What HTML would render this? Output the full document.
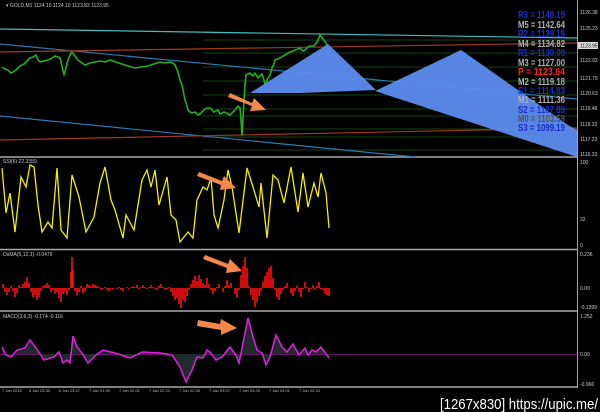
<!DOCTYPE html>
<html><head><meta charset="utf-8"><style>
html,body{margin:0;padding:0;background:#000;width:600px;height:412px;overflow:hidden}
svg{display:block}
text{font-family:"Liberation Sans",sans-serif}
</style></head><body>
<svg width="600" height="412" viewBox="0 0 600 412" xmlns="http://www.w3.org/2000/svg">
<rect width="600" height="412" fill="#000"/>
<g stroke="#a8a8a8" stroke-width="1.5">
<line x1="0" y1="157" x2="578" y2="157"/>
<line x1="0" y1="249.5" x2="578" y2="249.5"/>
<line x1="0" y1="311" x2="578" y2="311"/>
<line x1="0" y1="387" x2="578" y2="387"/>
</g>
<line x1="577.5" y1="0" x2="577.5" y2="388" stroke="#a8a8a8" stroke-width="1"/>

<text x="6" y="7" font-size="5" fill="#ccc">▾ GOLD,M1  1124.10 1124.10 1123.83 1123.95</text>
<g stroke="#1d5a1d" stroke-width="0.8">
<line x1="203" y1="40" x2="577" y2="40"/><line x1="203" y1="53" x2="577" y2="53"/>
<line x1="203" y1="67" x2="577" y2="67"/><line x1="203" y1="81" x2="577" y2="81"/>
<line x1="203" y1="95" x2="577" y2="95"/><line x1="203" y1="109" x2="577" y2="109"/>
<line x1="203" y1="116" x2="577" y2="116"/><line x1="203" y1="129" x2="577" y2="129"/>
<line x1="203" y1="137" x2="577" y2="137"/><line x1="203" y1="150" x2="577" y2="150"/>
</g>
<line x1="0" y1="29" x2="577" y2="38" stroke="#3fbfbf" stroke-width="1.2"/>
<line x1="0" y1="44" x2="577" y2="99" stroke="#2a7ab0" stroke-width="1.2"/>
<line x1="0" y1="52" x2="577" y2="43" stroke="#a03a20" stroke-width="1.2"/>
<line x1="0" y1="116" x2="415" y2="157" stroke="#2a7ab0" stroke-width="1.2"/>
<line x1="0" y1="140" x2="577" y2="128" stroke="#a03a20" stroke-width="1.2"/>
<polyline fill="none" stroke="#22b022" stroke-width="1.6" stroke-linejoin="round" points="2,67 5,69 8,70 11,73 13,72 16,70 20,66 24,64 27,61 30,58 33,57 36,55 38,60 40,62 44,61 48,60 52,58 55,56 58,57 60,58 62,66 64,75 66,68 68,60 70,55 72,52 75,56 78,60 82,63 85,65 90,63 95,62 100,61 105,62 110,60 116,62 122,64 128,66 135,68 141,67 148,66 154,64 160,62 165,63 170,62 173,63 175,65 178,72 180,80 182,85 184,95 185,100 187,106 188,110 190,112 192,113 195,112 198,115 200,114 204,110 207,108 210,108 214,112 218,110 220,114 224,112 228,114 230,115 233,112 235,110 238,106 240,108 241,120 242,135 243,118 244,100 245,85 246,75 248,74 250,73 253,76 255,73 258,78 260,76 262,74 264,80 265,85 267,80 268,78 270,75 272,68 274,64 275,60 278,59 280,58 283,56 285,55 288,53 290,52 293,51 295,50 298,49 300,48 303,51 305,50 308,47 310,46 313,46 315,45 317,42 318,40 320,35 322,38 324,40 326,43 327,45"/>
<polygon fill="#5b8cf0" opacity="0.95" points="250,93 328,44 376,90 300,93"/>
<polygon fill="#5b8cf0" opacity="0.95" points="375,91 461,50 568,125 577,130 577,157"/>
<g font-size="10" font-weight="bold">
<text x="518" y="18" fill="#1e2ec8" textLength="47" lengthAdjust="spacingAndGlyphs">R3 = 1148.19</text>
<text x="518" y="28" fill="#b0b0b0" textLength="47" lengthAdjust="spacingAndGlyphs">M5 = 1142.64</text>
<text x="518" y="37" fill="#1e2ec8" textLength="47" lengthAdjust="spacingAndGlyphs">R2 = 1139.19</text>
<text x="518" y="47" fill="#b0b0b0" textLength="47" lengthAdjust="spacingAndGlyphs">M4 = 1134.82</text>
<text x="518" y="56" fill="#1e2ec8" textLength="47" lengthAdjust="spacingAndGlyphs">R1 = 1130.09</text>
<text x="518" y="66" fill="#b0b0b0" textLength="47" lengthAdjust="spacingAndGlyphs">M3 = 1127.00</text>
<text x="518" y="75" fill="#ff2020" textLength="47" lengthAdjust="spacingAndGlyphs">P  = 1123.64</text>
<text x="518" y="85" fill="#b0b0b0" textLength="47" lengthAdjust="spacingAndGlyphs">M2 = 1119.18</text>
<text x="518" y="94" fill="#1e2ec8" textLength="47" lengthAdjust="spacingAndGlyphs">S1 = 1114.83</text>
<text x="518" y="103" fill="#b0b0b0" textLength="47" lengthAdjust="spacingAndGlyphs">M1 = 1111.36</text>
<text x="518" y="113" fill="#1e2ec8" textLength="47" lengthAdjust="spacingAndGlyphs">S2 = 1107.89</text>
<text x="518" y="122" fill="#555" textLength="47" lengthAdjust="spacingAndGlyphs">M0 = 1103.59</text>
<text x="518" y="131" fill="#1e2ec8" textLength="47" lengthAdjust="spacingAndGlyphs">S3 = 1099.19</text>
</g>
<g font-size="5" fill="#ccc">
<text x="580" y="14">1126.38</text><text x="580" y="30">1125.23</text>
<rect x="578" y="42" width="20" height="7" fill="#ddd"/><text x="580" y="47.5" fill="#000">1123.95</text>
<text x="580" y="62">1122.93</text><text x="580" y="80">1121.79</text>
<text x="580" y="95">1120.63</text><text x="580" y="110">1119.48</text>
<text x="580" y="126">1118.33</text><text x="580" y="141">1117.23</text>
<text x="580" y="156">1116.33</text>
<text x="580" y="164">100</text><text x="580" y="221">32</text><text x="580" y="247">0</text>
<text x="580" y="256">0.236</text><text x="580" y="290">0.00</text><text x="580" y="309">-0.1399</text>
<text x="580" y="318">1.252</text><text x="580" y="356">0.00</text><text x="580" y="386">-0.966</text>
</g>
<path d="M230 93 L252 103 L254 98 L266 110 L250 111 L252 106 L228 97Z" fill="#f4874a"/>

<text x="3" y="163" font-size="5" fill="#ccc">SSI(6) 22.3359</text>
<polyline fill="none" stroke="#f0f000" stroke-width="1.3" points="2,168 6,213 10,193 15,232 21,177 26,187 30,165 34,167 38,205 42,232 48,222 52,228 57,168 61,230 67,238 72,175 79,197 86,232 94,217 100,183 105,167 111,200 115,210 123,238 126,215 134,230 142,180 147,170 151,187 155,170 159,205 167,177 171,215 176,220 180,242 188,232 193,238 197,200 203,187 207,190 211,178 214,215 218,228 224,200 228,170 232,187 239,233 247,168 253,187 259,207 261,183 267,238 273,175 278,180 284,203 291,167 298,212 303,173 308,207 314,183 318,197 321,173 326,193 329,228"/>
<path d="M199 172 L222 181 L224 176 L236 188 L220 190 L221 185 L197 176Z" fill="#f4874a"/>

<text x="3" y="256" font-size="5" fill="#ccc">OsMA(5,12,3) -0.0479</text>
<path stroke="#ff1010" stroke-width="1.6" fill="none" d="M3 288V284M5 288V292M7 288V295M9 288V292M11 288V286M13 288V291M15 288V297M17 288V293M19 288V285M21 288V287M23 288V284M25 288V282M27 288V277M29 288V283M31 288V292M33 288V297M35 288V295M37 288V300M39 288V297M41 288V291M43 288V286M45 288V285M47 288V283M49 288V285M51 288V292M53 288V290M55 288V294M57 288V292M59 288V298M61 288V302M63 288V294M65 288V292M67 288V295M69 288V290M71 288V272M72 288V257M73 288V270M75 288V291M77 288V295M79 288V292M81 288V286M83 288V293M85 288V291M87 288V284M89 288V285M91 288V286M93 288V284M95 288V285M97 288V286M99 288V287M101 288V290M103 288V289M105 288V287M107 288V290M109 288V291M111 288V289M113 288V290M115 288V288M117 288V289M119 288V287M121 288V290M123 288V291M125 288V288M127 288V287M129 288V289M131 288V287M133 288V286M135 288V287M137 288V285M139 288V289M141 288V287M143 288V285M145 288V287M147 288V289M149 288V287M151 288V285M153 288V287M155 288V289M157 288V290M159 288V286M161 288V284M163 288V287M165 288V290M167 288V289M169 288V287M171 288V292M173 288V296M175 288V300M177 288V298M179 288V304M181 288V308M183 288V300M185 288V302M187 288V296M189 288V290M191 288V284M193 288V280M195 288V276M197 288V281M199 288V275M201 288V279M203 288V283M205 288V285M207 288V278M209 288V284M211 288V290M213 288V294M215 288V291M217 288V287M219 288V284M221 288V288M223 288V292M225 288V286M227 288V280M229 288V285M231 288V283M233 288V288M235 288V294M237 288V298M239 288V290M241 288V275M243 288V266M245 288V257M247 288V268M249 288V286M251 288V295M253 288V300M255 288V307M257 288V302M259 288V296M261 288V291M263 288V282M265 288V276M267 288V272M269 288V268M271 288V266M273 288V278M275 288V290M277 288V297M279 288V300M281 288V294M283 288V290M285 288V286M287 288V283M289 288V288M291 288V293M293 288V296M295 288V291M297 288V286M299 288V292M301 288V297M303 288V289M305 288V282M307 288V287M309 288V292M311 288V289M313 288V285M315 288V290M317 288V286M319 288V282M321 288V289M323 288V290M325 288V293M327 288V295M329 288V296"/>
<path d="M205 255 L228 264 L230 259 L242 271 L226 273 L227 268 L203 259Z" fill="#f4874a"/>

<text x="3" y="318" font-size="5" fill="#ccc">MACD(3,6,3) -0.174 -0.116</text>
<line x1="0" y1="354.5" x2="577" y2="354.5" stroke="#8a1a8a" stroke-width="0.8"/>
<polygon fill="#1f2b2b" points="2,354 2,347 6,355 11,357 17,350 25,348 30,340 36,348 44,360 54,357 59,352 63,363 67,360 70,363 73,336 77,347 82,353 88,363 96,355 103,350 115,353 130,358 142,352 161,353 172,355 180,367 186,382 192,370 197,357 203,358 207,350 211,353 216,360 222,357 230,347 236,355 239,363 248,318 253,337 257,350 262,353 266,365 270,357 276,335 282,347 287,352 293,344 299,355 305,348 308,355 312,350 316,352 321,347 329,358 329,354"/>
<polyline fill="none" stroke="#e020e0" stroke-width="1.5" points="2,347 6,355 11,357 17,350 25,348 30,340 36,348 44,360 54,357 59,352 63,363 67,360 70,363 73,336 77,347 82,353 88,363 96,355 103,350 115,353 130,358 142,352 161,353 172,355 180,367 186,382 192,370 197,357 203,358 207,350 211,353 216,360 222,357 230,347 236,355 239,363 248,318 253,337 257,350 262,353 266,365 270,357 276,335 282,347 287,352 293,344 299,355 305,348 308,355 312,350 316,352 321,347 329,358"/>
<path d="M198 320 L220 324 L221 319 L237 328 L221 335 L221 330 L197 326Z" fill="#f4874a"/>

<g font-size="4" fill="#bbb">
<text x="2" y="392">7 Jan 2015</text><text x="29" y="392">6 Jan 23:35</text><text x="59" y="392">6 Jan 23:47</text>
<text x="89" y="392">7 Jan 01:39</text><text x="119" y="392">7 Jan 02:01</text><text x="149" y="392">7 Jan 02:23</text>
<text x="179" y="392">7 Jan 02:45</text><text x="209" y="392">7 Jan 03:07</text><text x="239" y="392">7 Jan 03:29</text>
<text x="269" y="392">7 Jan 04:01</text><text x="299" y="392">7 Jan 05:43</text>
</g>
<text x="440" y="409" font-size="15" fill="#fff" textLength="158" lengthAdjust="spacingAndGlyphs">[1267x830] https://upic.me/</text>
</svg>
</body></html>
